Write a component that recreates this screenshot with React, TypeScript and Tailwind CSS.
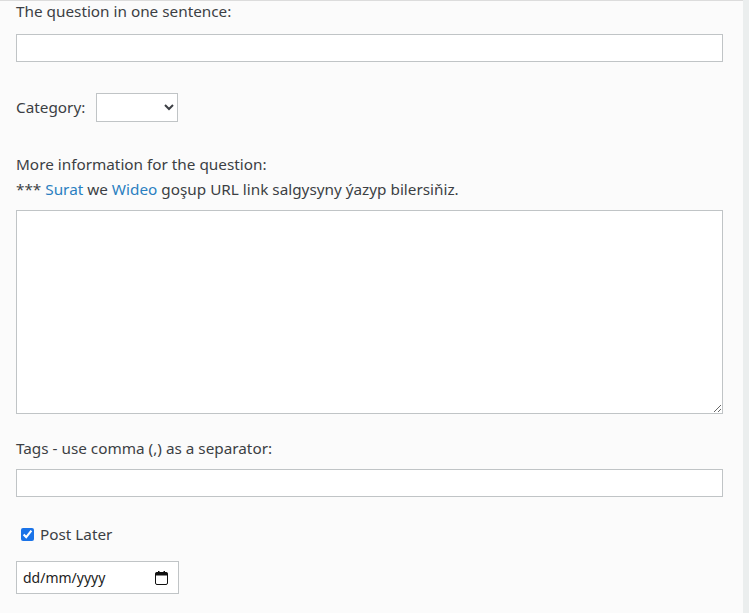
import React from "react";

export default function App() {
  return (
    <div className="min-h-[613px] w-[749px] flex bg-[#ebeeee] font-['Noto_Sans',sans-serif] text-[15.3px] text-[#3c3f44]">
      <div className="w-[743px] bg-[#fbfbfb] border-t border-[#dcdcdc] pl-4 pr-5">
        <div className="leading-6 mt-[-2px]">The question in one sentence:</div>
        <input
          type="text"
          className="mt-[11px] block w-full h-7 border border-[#c0c4c6] bg-white outline-none"
        />

        <div className="mt-[31px] flex items-center gap-[11px]">
          <span>Category:</span>
          <select className="w-[82px] h-[29px] border border-[#c0c4c6] bg-white text-sm">
            <option></option>
          </select>
        </div>

        <div className="mt-[30px] leading-[25px]">
          <div>More information for the question:</div>
          <div>
            *** <a className="text-[#2a7fc1]">Surat</a> we{" "}
            <a className="text-[#2a7fc1]">Wideo</a> goşup URL link salgysyny ýazyp bilersiňiz.
          </div>
        </div>
        <textarea className="mt-2 block w-full h-[204px] border border-[#c0c4c6] bg-white outline-none" />

        <div className="mt-[22px] leading-6">Tags - use comma (,) as a separator:</div>
        <input
          type="text"
          className="mt-[9px] block w-full h-7 border border-[#c0c4c6] bg-white outline-none"
        />

        <label className="mt-[25px] ml-[5px] flex items-center gap-[6px] leading-6">
          <input type="checkbox" defaultChecked className="w-[13px] h-[13px] m-0 accent-[#1a73e8]" />
          <span>Post Later</span>
        </label>

        {/* date field drawn by hand so the placeholder reads dd/mm/yyyy */}
        <div className="mt-[15px] flex items-center justify-between w-[163px] h-[33px] pl-[6px] pr-[10px] border border-[#c0c4c6] bg-white text-[14px] text-[#222]">
          <span>dd/mm/yyyy</span>
          <svg width="13" height="14" viewBox="0 0 13 14" fill="none">
            <rect x="0.5" y="1.5" width="12" height="12" rx="1.5" stroke="#111" />
            <rect x="0.5" y="1.5" width="12" height="3" fill="#111" />
            <rect x="3" y="0" width="1.5" height="3" fill="#111" />
            <rect x="8.5" y="0" width="1.5" height="3" fill="#111" />
          </svg>
        </div>
      </div>
    </div>
  );
}
